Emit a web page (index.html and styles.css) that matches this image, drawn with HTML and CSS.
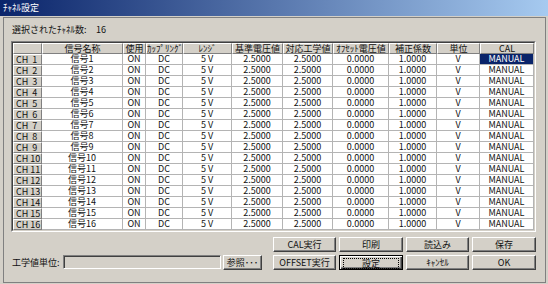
FILE: index.html
```html
<!DOCTYPE html>
<html lang="ja">
<head>
    <meta charset="UTF-8">
    <title>ﾁｬﾈﾙ設定</title>
    <link rel="stylesheet" href="styles.css">
</head>
<body>

<div class="titlebar">ﾁｬﾈﾙ設定</div>
<div class="frame">
    <div class="count">
        <span class="count-label">選択されたﾁｬﾈﾙ数:</span>
        <span id="count_value">16</span>
    </div>
    <div class="grid-outer">
        <div class="grid-inner">
            <table id="channel_table">
                <colgroup>
                    <col style="width: 29px">
                    <col style="width: 81px">
                    <col style="width: 23px">
                    <col style="width: 37px">
                    <col style="width: 49px">
                    <col style="width: 51px">
                    <col style="width: 50px">
                    <col style="width: 56px">
                    <col style="width: 48px">
                    <col style="width: 43px">
                    <col style="width: 54px">
                </colgroup>
                <thead>
                <tr>
                    <th></th>
                    <th>信号名称</th>
                    <th>使用</th>
                    <th>ｶｯﾌﾟﾘﾝｸﾞ</th>
                    <th>ﾚﾝｼﾞ</th>
                    <th>基準電圧値</th>
                    <th>対応工学値</th>
                    <th>ｵﾌｾｯﾄ電圧値</th>
                    <th>補正係数</th>
                    <th>単位</th>
                    <th>CAL</th>
                </tr>
                </thead>
                <tbody id="channel_table_body">
                </tbody>
            </table>
        </div>
    </div>
    <div class="bottom">
        <label class="unit-label" for="unit_field">工学値単位:</label>
        <input class="unit-field" id="unit_field" type="text">
        <button class="btn btn-browse">参照･･･</button>
        <div class="buttons">
            <button class="btn">CAL実行</button>
            <button class="btn">印刷</button>
            <button class="btn">読込み</button>
            <button class="btn">保存</button>
            <button class="btn">OFFSET実行</button>
            <button class="btn btn-default"><span class="focus">設定</span></button>
            <button class="btn">ｷｬﾝｾﾙ</button>
            <button class="btn">OK</button>
        </div>
    </div>
</div>

<script>
    const body = document.getElementById("channel_table_body");
    for (let i = 1; i <= 16; i++) {
        const ch = i < 10 ? "CH  " + i : "CH " + i;
        const cal = i === 1 ? '<td class="selected">MANUAL</td>' : '<td>MANUAL</td>';
        const row = document.createElement("tr");
        row.innerHTML = `
   <th class="ch">${ch}</th><td>信号${i}</td><td>ON</td><td>DC</td><td>5 V</td><td>2.5000</td><td>2.5000</td><td>0.0000</td><td>1.0000</td><td>V</td>${cal}
`;
        body.appendChild(row);
    }
</script>
</body>
</html>
```

FILE: styles.css
```css
body {
    margin: 0;
    background: #d4d0c8;
    font-family: "Noto Sans CJK JP", sans-serif;
    font-size: 9px;
    color: #111;
}
.titlebar {
    height: 16px;
    line-height: 16px;
    padding-left: 3px;
    color: #fff;
    background: linear-gradient(to right, #0a246a, #a6caf0);
}
.frame {
    margin: 1px 2px 0 3px;
    height: 264px;
    border: 1px solid #808080;
    padding: 0 9px 0 7px;
}
.count {
    height: 12px;
    line-height: 12px;
    margin-top: 6px;
    padding-left: 1px;
}
.count-label {
    display: inline-block;
    width: 82px;
}
.grid-outer {
    margin-top: 5px;
    border: 1px solid;
    border-color: #808080 #fff #fff #808080;
}
.grid-inner {
    border: 1px solid;
    border-color: #404040 #d4d0c8 #d4d0c8 #404040;
}
table {
    table-layout: fixed;
    border-collapse: separate;
    border-spacing: 0;
    width: 521px;
    background: #fff;
}
th, td {
    padding: 0;
    white-space: nowrap;
    font-weight: normal;
    text-align: center;
}
thead th {
    height: 9px;
    line-height: 9px;
    background: #d4d0c8;
    border-top: 1px solid #fff;
    border-left: 1px solid #fff;
    border-right: 1px solid #808080;
    border-bottom: 1px solid #808080;
}
tbody td {
    height: 10px;
    line-height: 10px;
    border-right: 1px solid #b4b4b4;
    border-bottom: 1px solid #b4b4b4;
}
tbody th.ch {
    height: 8px;
    line-height: 8px;
    text-align: left;
    padding-left: 2px;
    white-space: pre;
    background: #d4d0c8;
    border-top: 1px solid #fff;
    border-left: 1px solid #fff;
    border-right: 1px solid #808080;
    border-bottom: 1px solid #808080;
}
tbody td.selected {
    background: #0a246a;
    color: #fff;
}
.bottom {
    display: flex;
    align-items: flex-end;
    margin-top: 5px;
    padding-left: 1px;
}
.unit-label {
    width: 51px;
    line-height: 14px;
}
.unit-field {
    box-sizing: border-box;
    width: 158px;
    height: 14px;
    margin: 0 0 1px 0;
    padding: 0;
    border: 1px solid;
    border-color: #808080 #fff #fff #808080;
    box-shadow: inset 1px 1px #404040;
    background: #d4d0c8;
}
.btn {
    box-sizing: border-box;
    height: 15px;
    margin: 0;
    padding: 0;
    font-family: "Noto Sans CJK JP", sans-serif;
    font-size: 9px;
    line-height: 12px;
    color: #111;
    background: #d4d0c8;
    border: 1px solid;
    border-color: #fff #404040 #404040 #fff;
    box-shadow: inset -1px -1px #808080;
}
.btn-browse {
    width: 39px;
    margin-left: 2px;
}
.buttons {
    display: grid;
    grid-template-columns: 63px 64px 63px 64px;
    grid-auto-rows: 15px;
    gap: 3px;
    margin-left: auto;
}
.btn-default {
    border: 1px solid #000;
    box-shadow: inset 1px 1px #fff, inset -1px -1px #404040, inset -2px -2px #808080;
    padding: 2px 3px;
}
.focus {
    display: block;
    height: 9px;
    line-height: 9px;
    border: 1px dotted #000;
}
```
